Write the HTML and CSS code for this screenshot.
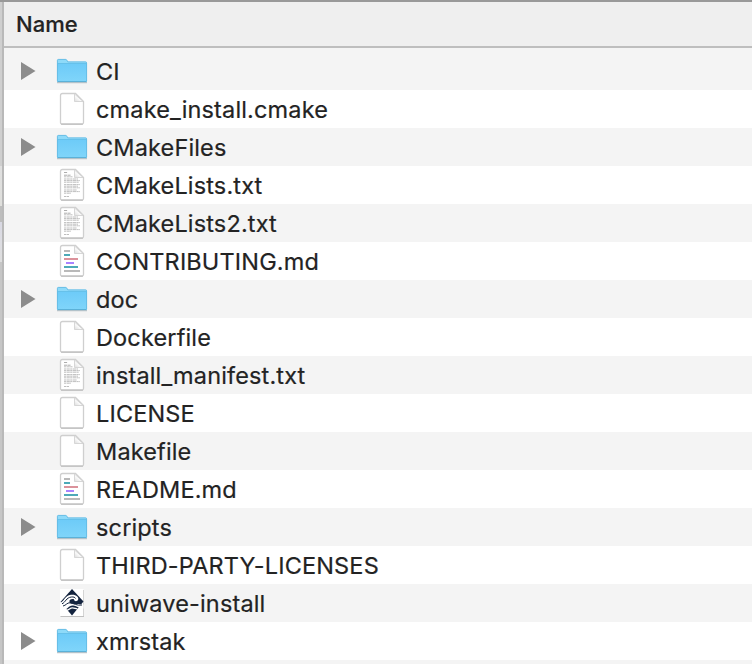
FILE: index.html
```
<!DOCTYPE html>
<html lang="en">
<head>
<meta charset="utf-8">
<title>Files</title>
<link rel="stylesheet" href="styles.css">
</head>
<body>
<svg class="defs" aria-hidden="true">
  <defs>
    <linearGradient id="blue" x1="0" y1="0" x2="0" y2="1"><stop offset="0" stop-color="#6dcbf8"/><stop offset="1" stop-color="#80d5fa"/></linearGradient>
    <linearGradient id="fold" x1="0" y1="1" x2="1" y2="0"><stop offset="0" stop-color="#dcdcdc"/><stop offset=".5" stop-color="#fff"/><stop offset="1" stop-color="#fff"/></linearGradient>
    <symbol id="folder" viewBox="0 0 32 28">
      <path d="M1 25.500h30" stroke="#bcc5ca" stroke-width="1.500"/>
      <path d="M1 24V3.500Q1 2 2.500 2h7q1 0 1.600 1l.9 1.500h17.500Q31 4.500 31 6v18q0 1-1 1H2q-1 0-1-1z" fill="#8edaf9"/>
      <path d="M1 6.500h30V24q0 1-1 1H2q-1 0-1-1z" fill="url(#blue)"/>
      <path d="M1.400 24V3.500Q1.400 2.400 2.500 2.400h7q.8 0 1.300.9l1 1.600h17.700q1.100 0 1.100 1.100v18" fill="none" stroke="#62b8df" stroke-width=".8"/>
      <path d="M1.500 6.500h29" stroke="#61bce6" stroke-width=".8"/>
      <path d="M1.500 24.600h29" stroke="#54a9d0" stroke-width=".9"/>
    </symbol>
    <symbol id="page" viewBox="0 0 26 34">
      <path d="M1.500 3.500Q1.500 1.500 3.500 1.500H16.500L24.500 9.500V30.500Q24.500 32 23 32H3Q1.500 32 1.500 30.500z" fill="#fff" stroke="#cfcfcf" stroke-width="1.300"/>
      <path d="M2 32.200h22" stroke="#b8b8b8" stroke-width=".9"/>
      <path d="M15.500 2v7.500H24z" fill="url(#fold)" stroke="#d2d2d2" stroke-width=".9"/>
    </symbol>
    <symbol id="text" viewBox="0 0 26 34">
      <use href="#page"/>
      <g fill="none" stroke="#989898" stroke-width=".8">
        <path stroke-dasharray="3 .4" d="M5 4.500h3.500M5 7.200h7"/>
        <path stroke-dasharray="2.300 .5 3 .4" opacity=".8" d="M5 8.800h9M5 11h14M5 12.600h16M5 14.200h15M5 16.600h16M5 18.200h14M5 19.800h16M5 22h13M5 23.600h16M5 25.200h7M5 28.500h5"/>
      </g>
    </symbol>
    <symbol id="markdown" viewBox="0 0 26 34">
      <use href="#page"/>
      <g stroke-width="2" fill="none">
        <path d="M5 7h6M5 27h16" stroke="#b9b9b9"/>
        <path d="M5 11h6M5 23h14" stroke="#4eaab8"/>
        <path d="M5 15h14" stroke="#db929b"/>
        <path d="M7 19h8" stroke="#a983ff"/>
      </g>
    </symbol>
    <symbol id="wave" viewBox="0 0 28 30">
      <path d="M2.500 2h23.500v26.700H2.500z" fill="#aaa"/>
      <path d="M2 1h23.500v27H2z" fill="#fff"/>
      <path d="M14 1L25.500 13.500 14 27.500 2.500 14z" fill="#14243f"/>
      <path d="M2 14.500C6 14.500 6.500 7.500 13 6.800c5-.5 8.500 2.500 7 5.200-1 1.800-4 1.500-4-.8-3-.7-5 .8-4.500 2.800.8 3 7 1.500 14 2.500v4c-5 .5-7-3.500-11-3-4 .2-5 3.700-7.500 4.200L2 16z" fill="#fff"/>
      <g fill="none" stroke="#14243f" stroke-width="1">
        <path d="M4 15.800C7.500 14.500 8 9.500 13.500 9c2-.2 3.500.2 4 1.500M5 18c3-.5 4-3.500 7-3.200 4 .4 6.500 3.200 12 2.200"/>
      </g>
      <path d="M8.500 22.300c3 0 3-2.500 6-2.500 2 0 3.500 1.200 5 1" fill="none" stroke="#fff" stroke-width="1.300"/>
    </symbol>
    <symbol id="arrow" viewBox="0 0 16 18"><path d="M1 0l14.500 9L1 18z" fill="#8c8c8c"/></symbol>
  </defs>
</svg>
<div class="window">
  <div class="edge"></div>
  <main class="list">
    <header class="head">Name</header>
    <ul class="rows">
      <li class="row dir"><svg class="arrow"><use href="#arrow"/></svg><svg class="folder"><use href="#folder"/></svg><span class="name">CI</span></li>
      <li class="row"><svg class="page"><use href="#page"/></svg><span class="name">cmake_install.cmake</span></li>
      <li class="row dir"><svg class="arrow"><use href="#arrow"/></svg><svg class="folder"><use href="#folder"/></svg><span class="name">CMakeFiles</span></li>
      <li class="row"><svg class="page"><use href="#text"/></svg><span class="name">CMakeLists.txt</span></li>
      <li class="row"><svg class="page"><use href="#text"/></svg><span class="name">CMakeLists2.txt</span></li>
      <li class="row"><svg class="page"><use href="#markdown"/></svg><span class="name">CONTRIBUTING.md</span></li>
      <li class="row dir"><svg class="arrow"><use href="#arrow"/></svg><svg class="folder"><use href="#folder"/></svg><span class="name">doc</span></li>
      <li class="row"><svg class="page"><use href="#page"/></svg><span class="name">Dockerfile</span></li>
      <li class="row"><svg class="page"><use href="#text"/></svg><span class="name">install_manifest.txt</span></li>
      <li class="row"><svg class="page"><use href="#page"/></svg><span class="name">LICENSE</span></li>
      <li class="row"><svg class="page"><use href="#page"/></svg><span class="name">Makefile</span></li>
      <li class="row"><svg class="page"><use href="#markdown"/></svg><span class="name">README.md</span></li>
      <li class="row dir"><svg class="arrow"><use href="#arrow"/></svg><svg class="folder"><use href="#folder"/></svg><span class="name">scripts</span></li>
      <li class="row"><svg class="page"><use href="#page"/></svg><span class="name">THIRD-PARTY-LICENSES</span></li>
      <li class="row"><svg class="wave"><use href="#wave"/></svg><span class="name">uniwave-install</span></li>
      <li class="row dir"><svg class="arrow"><use href="#arrow"/></svg><svg class="folder"><use href="#folder"/></svg><span class="name">xmrstak</span></li>
    </ul>
  </main>
</div>
</body>
</html>
```
FILE: styles.css
```
* { box-sizing: border-box; }
body { margin: 0; background: #f4f4f4; color: #232323; font-family: Inter, "Liberation Sans", sans-serif; overflow: hidden; }
.defs { position: absolute; width: 0; height: 0; }
.window { display: flex; height: 664px; border-top: 2px solid #999; }
.edge {
  flex: none;
  width: 4px;
  border-right: 2px solid #b9b9b9;
  background: linear-gradient(#cfcfcf 0 164px, #e0e0e0 164px, #dfdfdc 204px, #bdbdbd 204px 220px, #d8d8e3 220px, #dddde2 240px, #dedede 260px, #c6c6c6 260px);
}
.list { flex: 1; min-width: 0; }
.head { height: 46px; padding-left: 12px; border-bottom: 2px solid #bebebe; background: #efefef; font-size: 22px; font-weight: 500; line-height: 44px; -webkit-text-stroke: .2px; }
.rows { margin: 0; padding: 4px 0 0; list-style: none; }
.row { display: grid; grid-template-columns: 49px 43px 1fr; align-items: center; height: 38px; }
.row:nth-child(even) { background: #fff; }
.row svg { display: block; grid-row: 1; }
.arrow { grid-column: 1; width: 16px; height: 18px; margin-left: 16px; }
.folder { grid-column: 2; width: 32px; height: 28px; margin: 0 0 0 3px; }
.page { grid-column: 2; width: 26px; height: 34px; margin-left: 6px; }
.wave { grid-column: 2; width: 28px; height: 30px; margin-left: 5px; }
.name { grid-column: 3; grid-row: 1; padding-top: 2px; font-size: 23.5px; line-height: 36px; letter-spacing: .15px; white-space: nowrap; -webkit-text-stroke: .2px; }
```
